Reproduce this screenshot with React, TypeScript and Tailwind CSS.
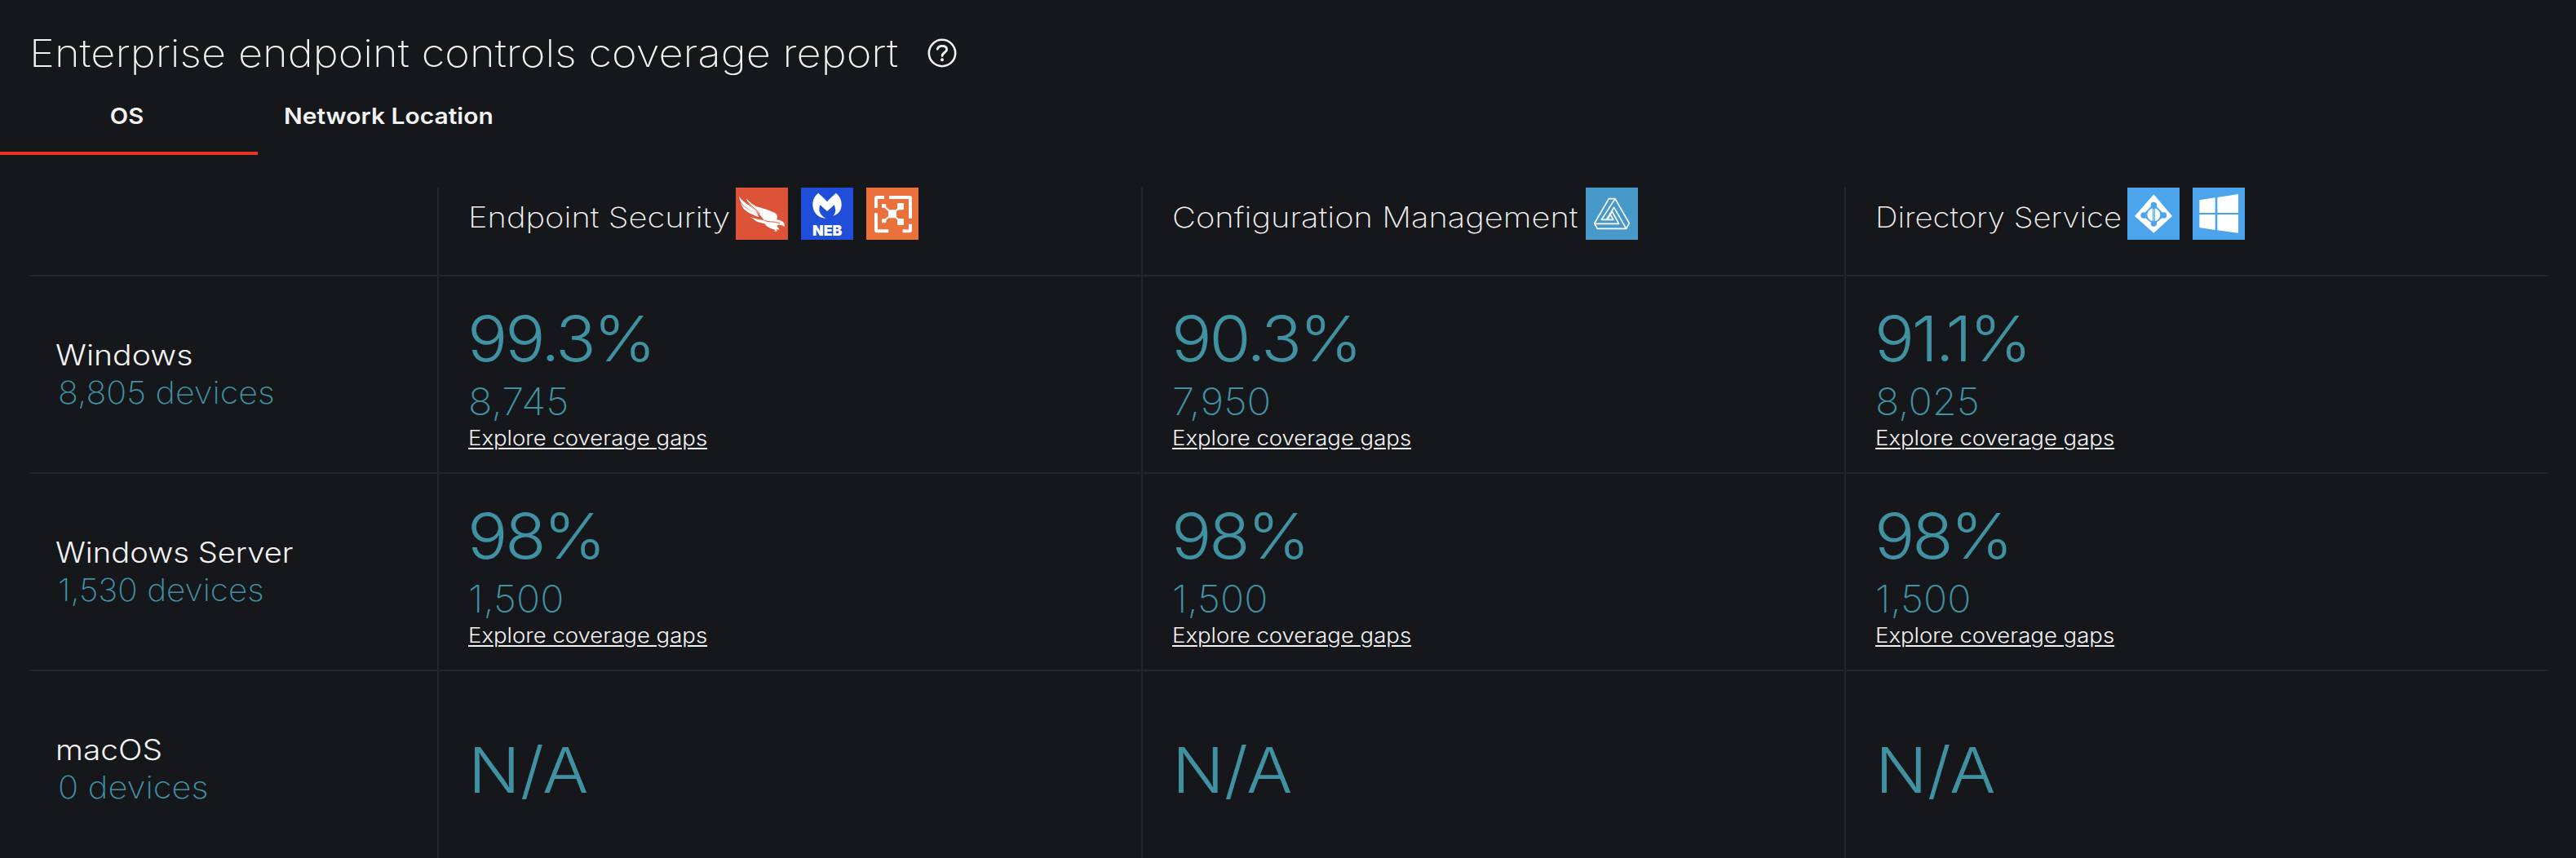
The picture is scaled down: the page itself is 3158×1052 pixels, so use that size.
import type { ReactNode } from "react";

function Tile({ color, children }: { color: string; children: ReactNode }) {
  return (
    <svg viewBox="0 0 192 192" className={`size-16 shrink-0 ${color}`} fill="#fff">
      {children}
    </svg>
  );
}

function FalconTile() {
  return (
    <Tile color="bg-[#dc5338]">
      <path d="M12 32C22 48 42 60 60 74C72 84 80 92 84 104C70 92 55 86 40 75C24 63 14 50 12 32Z" />
      <path d="M19 56C28 71 48 82 66 91C76 97 82 102 86 109C72 104 54 98 40 88C28 79 21 68 19 56Z" />
      <path d="M40 40C50 54 62 62 76 70C104 76 128 86 142 92C152 98 156 106 150 118C162 119 174 124 178 132C180 138 180 142 178 144C172 138 164 136 156 138C150 140 150 144 158 148L158 156L150 153L152 160L142 162L146 156C128 150 112 144 106 132C90 130 72 124 66 116L52 108C68 112 88 120 104 120L92 104C84 92 62 78 50 62C44 54 40 48 40 40Z" />
      <path d="M104 120C124 130 144 122 162 132" fill="none" stroke="#dc5338" strokeWidth="3" />
      <path d="M44 52C56 72 76 78 88 96" fill="none" stroke="#dc5338" strokeWidth="3" />
    </Tile>
  );
}

function NebulaTile() {
  return (
    <Tile color="bg-[#1f4fd8]">
      <path d="M64 20C70 27 90 43 96 52C102 43 122 27 128 20C141 30 149 44 149 62C149 84 138 98 118 104C128 94 129 82 122 64L96 87L70 64C62 84 70 104 92 113C60 112 43 88 43 62C43 44 51 30 64 20Z" />
      <text
        x="42"
        y="177"
        fontFamily="Inter, sans-serif"
        fontWeight="900"
        fontSize="54"
        textLength="109"
        lengthAdjust="spacingAndGlyphs"
      >
        NEB
      </text>
    </Tile>
  );
}

function NodesTile() {
  return (
    <Tile color="bg-[#ea713b]">
      <path
        d="M36 75V40Q36 36 40 36H66M84 36H158Q162 36 162 40V114M162 134V156Q162 160 158 160H134M36 94V156Q36 160 40 160H82"
        fill="none"
        stroke="#fff"
        strokeWidth="12"
      />
      <path d="M64 67L96 97L126 70M64 123L96 97L126 126" fill="none" stroke="#fff" strokeWidth="6" />
      <rect x="81" y="82" width="30" height="30" rx="3" />
      <rect x="57" y="60" width="16" height="15" rx="3" />
      <rect x="114" y="57" width="24" height="25" rx="4" />
      <rect x="57" y="115" width="16" height="15" rx="3" />
      <rect x="114" y="114" width="24" height="24" rx="4" />
    </Tile>
  );
}

function TriangleTile() {
  return (
    <Tile color="bg-[#4699c8]">
      <g fill="none" stroke="#fff" strokeWidth="5" strokeLinejoin="round">
        <path d="M85 41H108L160 131L149 151H43L32 132Z" />
        <path d="M108 41L58 118H102L92 102" />
        <path d="M33 133H122L97 88L80 118" />
        <path d="M149 151L104 73L76 118" />
      </g>
    </Tile>
  );
}

function DirectoryTile() {
  return (
    <Tile color="bg-[#4ca5ec]">
      <path d="M97 25L165 105L97 167L27 105Z" />
      <path d="M97 64L60 102L97 132L134 102Z" fill="#fff" stroke="#4ca5ec" strokeWidth="7" />
      <g fill="#4ca5ec">
        <circle cx="97" cy="64" r="11" />
        <circle cx="60" cy="102" r="11" />
        <circle cx="134" cy="102" r="11" />
        <circle cx="97" cy="132" r="11" />
      </g>
      <circle cx="97" cy="100" r="26" fill="#fff" stroke="#4ca5ec" strokeWidth="4" />
      <path d="M97 64V132" stroke="#4ca5ec" strokeWidth="9" />
      <path d="M97 78V122" stroke="#fff" strokeWidth="2" />
    </Tile>
  );
}

function WindowsTile() {
  return (
    <Tile color="bg-[#4ca5ec]">
      <path d="M25 46L83 37V93H25ZM91 36L168 24V93H91ZM25 99H83V156L25 147ZM91 99H168V167L91 157Z" />
    </Tile>
  );
}

type Metric = { value: string; valueFit: string; count?: string; countFit?: string };

const na: Metric = { value: "N/A", valueFit: "scale-x-[1.09]" };
const server: Metric = {
  value: "98%",
  valueFit: "scale-x-[1.067] -tracking-[3px] -ml-px",
  count: "1,500",
  countFit: "scale-x-[1.04]",
};

const columns = [
  { title: "Endpoint Security", width: "w-[328px]", fit: "scale-x-[1.15]", tiles: [FalconTile, NebulaTile, NodesTile] },
  { title: "Configuration Management", width: "w-[507px]", fit: "scale-x-[1.15]", tiles: [TriangleTile] },
  { title: "Directory Service", width: "w-[309px]", fit: "scale-x-[1.105]", tiles: [DirectoryTile, WindowsTile] },
];

const rows: { os: string; osFit: string; devices: string; devicesFit: string; metrics: Metric[] }[] = [
  {
    os: "Windows",
    osFit: "scale-x-[1.13]",
    devices: "8,805 devices",
    devicesFit: "scale-x-[1.07]",
    metrics: [
      { value: "99.3%", valueFit: "scale-x-[1.065] -tracking-[3px] -ml-px", count: "8,745", countFit: "scale-x-[1.05]" },
      { value: "90.3%", valueFit: "scale-x-[1.073] -tracking-[3px] -ml-px", count: "7,950", countFit: "scale-x-[1.06]" },
      { value: "91.1%", valueFit: "scale-x-[1.058] -tracking-[3px] -ml-px", count: "8,025", countFit: "scale-x-[1.045]" },
    ],
  },
  {
    os: "Windows Server",
    osFit: "scale-x-[1.1]",
    devices: "1,530 devices",
    devicesFit: "scale-x-[1.05]",
    metrics: [server, server, server],
  },
  {
    os: "macOS",
    osFit: "scale-x-[1.12]",
    devices: "0 devices",
    devicesFit: "scale-x-[1.08]",
    metrics: [na, na, na],
  },
];

function MetricCell({ metric }: { metric: Metric }) {
  return (
    <div
      className={`flex flex-col items-start border-l-2 border-[#25262b] pl-9 text-[#4092a3] ${
        metric.count ? "pt-7" : "pt-[73px]"
      }`}
    >
      <span className={`origin-left text-[77px] leading-[96px] font-[340] ${metric.valueFit}`}>{metric.value}</span>
      {metric.count && (
        <>
          <span className={`origin-left text-[46.5px] leading-[58px] font-[200] ${metric.countFit}`}>
            {metric.count}
          </span>
          <a
            href="#"
            className="origin-left scale-x-[1.101] text-[25px] leading-8 font-[350] text-[#f2f2f3] underline decoration-2 underline-offset-[3px]"
          >
            Explore coverage gaps
          </a>
        </>
      )}
    </div>
  );
}

export default function App() {
  return (
    <main className="h-[1052px] w-full overflow-hidden bg-[#15171a] font-[Inter,sans-serif] whitespace-nowrap text-[#f2f2f3]">
      <header className="flex h-[98px] items-center pt-8 pl-9">
        <h1 className="w-[1101px] shrink-0">
          <span className="inline-block origin-left scale-x-[1.126] text-[46.5px] leading-[66px] font-[200]">
            Enterprise endpoint controls coverage report
          </span>
        </h1>
        <svg viewBox="0 0 36 36" className="size-9" fill="none" stroke="currentColor">
          <circle cx="18" cy="18" r="16.2" strokeWidth="2.6" />
          <path
            d="M12.2 13.2C13 10.6 15 9.3 18 9.3C21.4 9.3 23.7 11 23.7 13.8C23.7 17.2 18.1 17.4 18.1 21.6"
            strokeWidth="2.8"
            strokeLinecap="round"
          />
          <circle cx="18" cy="26.2" r="2" fill="currentColor" stroke="none" />
        </svg>
      </header>

      <nav className="flex h-[92px] text-[27.5px] font-semibold">
        <button className="flex w-[316px] items-center justify-center border-b-4 border-[#e93323] pt-0.5 pr-1">
          <span className="scale-x-[1.06]">OS</span>
        </button>
        <button className="flex items-center border-b-4 border-transparent pt-0.5 pl-8">
          <span className="origin-left scale-x-[1.09]">Network Location</span>
        </button>
      </nav>

      <section className="mx-9 mt-10 w-[3088px]">
        <div className="grid h-[109px] grid-cols-[500px_1fr_1fr_1fr] border-b-2 border-[#25262b]">
          <div />
          {columns.map((column) => (
            <div key={column.title} className="flex items-start border-l-2 border-[#25262b] pl-9">
              <h2 className={`shrink-0 ${column.width}`}>
                <span className={`inline-block origin-left text-[34.7px] leading-[73px] font-[220] ${column.fit}`}>
                  {column.title}
                </span>
              </h2>
              <div className="flex gap-4">
                {column.tiles.map((Icon, i) => (
                  <Icon key={i} />
                ))}
              </div>
            </div>
          ))}
        </div>

        {rows.map((row) => (
          <div key={row.os} className="grid h-[242px] grid-cols-[500px_1fr_1fr_1fr] border-b-2 border-[#25262b]">
            <div className="flex flex-col items-start pt-[73px] pl-8">
              <span className={`origin-left text-[34.7px] leading-[46px] font-[360] ${row.osFit}`}>{row.os}</span>
              <span className={`ml-[3px] origin-left text-[38.5px] leading-[46px] font-[200] text-[#4092a3] ${row.devicesFit}`}>
                {row.devices}
              </span>
            </div>
            {row.metrics.map((metric, i) => (
              <MetricCell key={i} metric={metric} />
            ))}
          </div>
        ))}
      </section>
    </main>
  );
}
